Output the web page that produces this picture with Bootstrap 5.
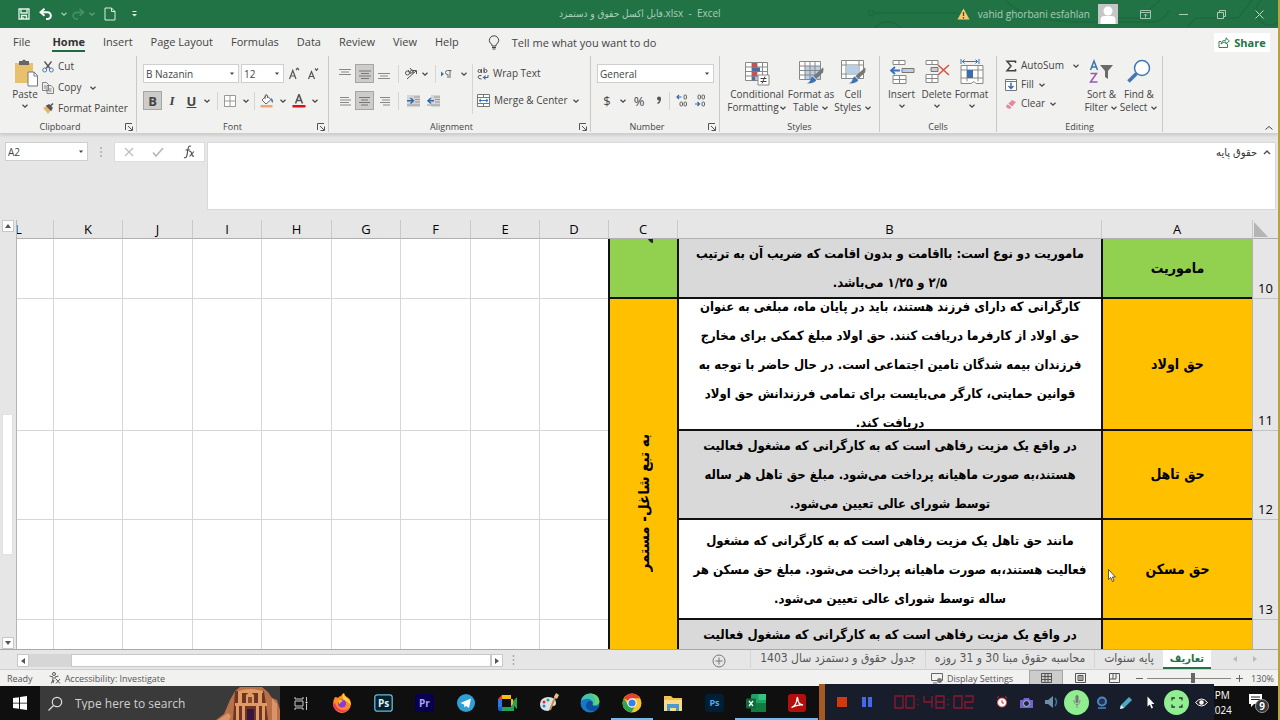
<!DOCTYPE html>
<html lang="en">
<head>
<meta charset="utf-8">
<meta name="viewport" content="width=device-width, initial-scale=1">
<title>Excel</title>
<link href="https://cdn.jsdelivr.net/npm/bootstrap@5.3.0/dist/css/bootstrap.min.css" rel="stylesheet">
<script src="https://cdn.jsdelivr.net/npm/bootstrap@5.3.0/dist/js/bootstrap.bundle.min.js"></script>
<style>
  body { font-family: "Open Sans", "DejaVu Sans", sans-serif; font-size: 10px; line-height: 13px; color: #444; background: #e6e6e6; border-right: 2px solid #b9a536; }
  button { border: 0; background: none; padding: 0; color: inherit; display: inline-flex; align-items: center; justify-content: center; flex: none; }
  svg { flex: none; display: block; }
  .ar { font-family: "DejaVu Sans Condensed", "DejaVu Sans", sans-serif; }

  /* title bar */
  .titlebar { height: 28px; background: #217346; color: #a9cfb8; position: relative; }
  .titlebar .caption { left: 559px; top: 7px; }
  .win-btn { width: 38px; height: 28px; }
  .circuit { left: 860px; top: 0; }

  /* tabs */
  .ribbon { background: #f1f1f0; border-bottom: 1px solid #cfcfcf; box-shadow: 0 1px 3px #c4c4c4; }
  .menu-row { height: 28px; font-size: 11px; }
  .menu-row .nav-link { color: #444; padding: 6px 9px 5px; line-height: 15px; }
  .menu-row .nav-link.active { font-weight: 700; color: #333; }
  .menu-row .nav-link.active span { display: block; border-bottom: 2px solid #1e6b41; padding-bottom: 1px; }
  .share { width: 56px; height: 19px; background: #fff; color: #217346; font-weight: 700; font-size: 11px; }

  /* ribbon groups */
  .groups { height: 77px; }
  .group { height: 76px; border-right: 1px solid #c9c9c9; flex: none; display: flex; flex-direction: column; position: relative; }
  .group-body { height: 65px; flex: none; }
  .group-name { font-size: 9px; line-height: 12px; text-align: center; }
  .launcher { position: absolute; right: 2px; bottom: 0; width: 10px; height: 10px; }
  .g-clip { width: 137px; } .g-font { width: 192px; } .g-align { width: 262px; } .g-num { width: 129px; }
  .g-style { width: 160px; } .g-cells { width: 117px; } .g-edit { width: 166px; }
  .big { flex-direction: column; justify-content: flex-start; text-align: center; line-height: 13px; padding-top: 3px; }
  .big svg.pic { height: 28px; width: 26px; margin-bottom: 1px; }
  .tool-row { display: flex; align-items: center; height: 19px; }
  .tool-row button { height: 19px; }
  .inset { padding-left: 2px; }
  .w12 { width: 12px; } .w16 { width: 16px; } .w19 { width: 19px; } .w20 { width: 20px; } .w28 { width: 28px; } .w34 { width: 34px; } .w35 { width: 35px; } .w40 { width: 40px; } .w50 { width: 50px; } .w58 { width: 58px; }
  .pressed { background: #cdccca !important; outline: 1px solid #a5a5a5; outline-offset: -1px; }
  .rule { width: 1px; height: 18px; background: #d5d5d5; flex: none; }
  .rule.tall { height: 50px; }
  .combo { height: 19px; border: 1px solid #cfcfcf; background: #fff url("data:image/svg+xml,%3Csvg xmlns='http://www.w3.org/2000/svg' viewBox='0 0 6 4'%3E%3Cpath d='M1 .5h4L3 3z' fill='%23444'/%3E%3C/svg%3E") no-repeat right 3px center / 6px 4px; appearance: none; padding: 0 2px; font-size: 10px; line-height: 14px; color: #444; border-radius: 0; }
  .c-font { width: 96px; margin-right: 2px; } .c-size { width: 43px; } .c-num { width: 117px; }
  .glyph { font-size: 13px; line-height: 16px; }
  .serif { font-family: "Liberation Serif", serif; }

  /* formula bar */
  .formula-bar { padding: 8px 2px 10px 5px; }
  .namebox { width: 83px; }
  .fx-box { width: 91px; height: 20px; background: #fff; border: 1px solid #ddd; }
  .formula { height: 68px; background: #fff; border: 1px solid #d9d9d9; margin-left: 2px; }
  .formula textarea { border: 0; resize: none; background: none; outline: 0; padding: 2px 2px; font-size: 11px; line-height: 15px; color: #333; height: 60px; }

  /* worksheet */
  .vscroll { width: 17px; padding: 0 3px 0 2px; border-right: 1px solid #b5b5b5; }
  .sb { background: #fff; border: 1px solid #c8c8c8; width: 12px; height: 12px; }
  .sheet { border-bottom: 1px solid #a8a8a8; }
  .cells { table-layout: fixed; width: calc(100% + 34px); border-collapse: separate; border-spacing: 0; color: #000; }
  .cells th { font-weight: 400; font-size: 13px; font-family: "Open Sans", sans-serif; }
  .cells thead th { height: 19px; padding: 0; line-height: 18px; text-align: center; background: #e6e6e6; border-left: 1px solid #c9c9c9; border-bottom: 1px solid #b0b0b0; }
  .cells tbody th { background: #e6e6e6; vertical-align: bottom; text-align: center; padding: 0; line-height: 20px; border-left: 1px solid #b0b0b0; border-bottom: 1px solid #c4c4c4; }
  .cells td { background: #fff; padding: 0; border-left: 1px solid #d6d6d6; border-bottom: 1px solid #d6d6d6; }
  .cells td.def { border-left: 2px solid #111; border-bottom: 2px solid #111; text-align: center; font-weight: 700; }
  .cells td.green { background: #92d050; } .cells td.amber { background: #ffc000; } .cells td.gray { background: #d9d9d9; }
  .col-h { width: 26px; } .col-a { width: 151px; } .col-b { width: 424px; } .col-c { width: 69px; } .col-n { width: 69px; } .col-m { width: 70px; }
  .txt { font-size: 13px; line-height: 29px; white-space: nowrap; overflow: hidden; display: flex; flex-direction: column; justify-content: center; align-items: center; }
  .txt.term { font-size: 14px; }
  .r10 { height: 58px; } .r11 { height: 130px; } .r12 { height: 87px; } .r13 { height: 98px; } .r14 { height: 86px; }
  .turned { writing-mode: vertical-rl; transform: rotate(180deg); font-size: 15px; line-height: 20px; margin: 0 auto; white-space: nowrap; }
  .pointer { left: 1091px; top: 349px; }

  /* sheet tabs */
  .sheetbar { height: 20px; padding-left: 17px; background: #e6e6e6; border-bottom: 1px solid #cfcfcf; }
  .hscroll { width: 486px; height: 13px; background: #d6d6d6; }
  .hthumb { background: #fff; border: 1px solid #c8c8c8; margin-left: 42px; }
  .sheet-tabs .nav-link { color: #555; font-size: 12px; line-height: 17px; padding: 0 9px 2px; white-space: nowrap; }
  .sheet-tabs .nav-link.active { background: #fff; color: #217346; font-weight: 700; font-size: 11px; border-bottom: 2px solid #217346; padding: 0 7px; }
  .tab-arrows { width: 67px; height: 18px; }

  /* status bar */
  .statusbar { height: 16px; background: #f1f1f0; font-size: 9px; color: #555; padding-left: 7px; }
  .view-btn { width: 34px; height: 16px; }
  .zoom { width: 84px; height: 12px; appearance: none; background: linear-gradient(#888, #888) center / 100% 1px no-repeat; margin: 0; }
  .zoom::-webkit-slider-thumb { appearance: none; width: 4px; height: 10px; background: #666; }

  /* task bar */
  .taskbar { height: 34px; background: #0f0f0f; position: relative; }
  .search { width: 240px; background: #3a3a3a; color: #d5d5d5; }
  .search input { background: none; border: 0; outline: 0; color: #ddd; font-size: 12px; padding: 0; width: 136px; }
  .search input::placeholder { color: #d0d0d0; opacity: 1; }
  .apps { width: 538px; }
  .apps button { flex: 1; }
  .apps button.running { box-shadow: inset 0 -2px #76b9ed; }
  .recorder { right: 64px; bottom: 0; width: 395px; height: 36px; background: #181d2b; border-left: 6px solid #a55a22; }
  .recorder button { width: 25px; height: 25px; border-radius: 50%; }
  .recorder .on { background: #90ee90; }
  .clock { color: #fff; font-size: 10px; line-height: 15px; width: 50px; text-align: center; }
</style>
</head>
<body class="d-flex flex-column vh-100 overflow-hidden">

<svg width="0" height="0" class="position-absolute" aria-hidden="true">
  <symbol id="chev" viewBox="0 0 8 8"><path d="M1.500 2.800 4 5.200 6.500 2.800" fill="none" stroke="currentColor" stroke-width="1.200"/></symbol>
  <symbol id="launch" viewBox="0 0 10 10"><path d="M1.500 8V1.500H8M4 4l4 4M8.500 4.500v4h-4" fill="none" stroke="#555"/></symbol>
  <symbol id="brush" viewBox="0 0 20 18"><path d="M19 0q1 1 0 5l-7 7-3-3z" fill="#777"/><path d="m9 9 3 3q0 5-10 5 4-2 4-5 1-3 3-3z" fill="#3a74b4"/><path d="m8 9 4 4" stroke="#fff"/></symbol>
</svg>

<header class="titlebar d-flex align-items-center flex-shrink-0">
  <div class="d-flex align-items-center ps-3">
    <button class="w16" aria-label="Save"><svg width="12" height="12" viewBox="0 0 12 12"><path d="M1 1h10v10H1zM3 1v4h6V1M3.500 11V7.500h5V11M5 9v2" fill="none" stroke="#e5f2ea" stroke-width="1.300"/></svg></button>
    <button class="w28" aria-label="Undo"><svg width="14" height="12" viewBox="0 0 14 12"><path d="M5.500.8 1.500 4.300l4 3.500M2 4.300h6.500a3.300 3.300 0 0 1 0 6.700H7" fill="none" stroke="#fff" stroke-width="1.900"/></svg></button>
    <svg width="8" height="8"><use href="#chev"/></svg>
    <button class="w20" aria-label="Redo"><svg width="14" height="12" viewBox="0 0 14 12"><path d="m8.500.8 4 3.500-4 3.500M12 4.300H5.500a3.300 3.300 0 0 0 0 6.700H7" fill="none" stroke="#439068" stroke-width="1.700"/></svg></button>
    <svg class="opacity-50" width="8" height="8"><use href="#chev"/></svg>
    <button class="w28" aria-label="New"><svg width="12" height="14" viewBox="0 0 12 14"><path d="M1 1h6.500L11 4.500V13H1zM7.500 1v3.500H11" fill="none" stroke="#dceee3"/></svg></button>
    <button class="w20" aria-label="Customize toolbar"><svg width="7" height="8" viewBox="0 0 7 8"><path d="M1.500 1.500h4" stroke="#dceee3"/><path d="M1 4h5L3.500 6.500z" fill="#dceee3"/></svg></button>
  </div>
  <div class="caption position-absolute"><bdi class="ar">فایل اکسل حقوق و دستمزد</bdi>.xlsx&nbsp; -&nbsp; Excel</div>
  <svg class="circuit position-absolute" width="418" height="28" viewBox="0 0 418 28"><g fill="none" stroke="#1d6a3e" stroke-width="1.500"><circle cx="11" cy="13" r="2.500"/><path d="M14 13h85M15 28q5-7 14-6 8 1 11 6M145 0q20 22 80 22h70q10-3 14-12M235 28l10-10h35l20-18M328 26l8-8h42l14-18"/><circle cx="410" cy="11" r="14"/></g></svg>
  <div class="d-flex align-items-center ms-auto position-relative">
    <svg width="13" height="12" viewBox="0 0 13 12"><path d="M6.500.5 12.500 11.500H.5z" fill="#f7c873"/><path d="M6.500 4v4M6.500 9v1.500" stroke="#6d3c14" stroke-width="1.300"/></svg>
    <span class="ps-2 pe-2">vahid ghorbani esfahlan</span>
    <svg width="20" height="20" viewBox="0 0 20 20"><path d="M0 0h20v20H0z" fill="#c6c6c6"/><circle cx="10" cy="7" r="4.500" fill="#fff"/><path d="M2.500 20v-4q0-4 4-4h7q4 0 4 4v4z" fill="#fff"/></svg>
    <button class="win-btn ms-2" aria-label="Ribbon display options"><svg width="11" height="9" viewBox="0 0 11 9"><path d="M.5.500h10v8H.5zM.5 2.500h10M5.500 7.500V4M4 5.500 5.500 4 7 5.500" fill="none" stroke="#9cc9af"/></svg></button>
    <button class="win-btn" aria-label="Minimize"><svg width="9" height="9" viewBox="0 0 9 9"><path d="M0 4.500h9" stroke="#a6cfb7"/></svg></button>
    <button class="win-btn" aria-label="Restore"><svg width="9" height="9" viewBox="0 0 9 9"><path d="M.5 2.500h6v6h-6zM2.500 2.500v-2h6v6h-2" fill="none" stroke="#a6cfb7"/></svg></button>
    <button class="win-btn" aria-label="Close"><svg width="9" height="9" viewBox="0 0 9 9"><path d="m.5.500 8 8m0-8-8 8" stroke="#b6dac5"/></svg></button>
  </div>
</header>

<section class="ribbon flex-shrink-0">
  <nav class="menu-row d-flex align-items-center">
    <div class="nav flex-nowrap ps-1">
      <a class="nav-link me-1" href="#">File</a>
      <a class="nav-link active" href="#"><span>Home</span></a>
      <a class="nav-link" href="#">Insert</a>
      <a class="nav-link text-nowrap" href="#">Page Layout</a>
      <a class="nav-link" href="#">Formulas</a>
      <a class="nav-link" href="#">Data</a>
      <a class="nav-link" href="#">Review</a>
      <a class="nav-link" href="#">View</a>
      <a class="nav-link" href="#">Help</a>
    </div>
    <button class="ms-3"><svg class="ms-1 me-2" width="12" height="15" viewBox="0 0 12 15"><path d="M4 11V9.500Q1.300 8 1.300 5.500a4.700 4.700 0 0 1 9.400 0Q10.700 8 8 9.500V11zM4 12.500h4M4.500 14h3" fill="none" stroke="#444"/></svg><span class="ps-1">Tell me what you want to do</span></button>
    <button class="share ms-auto me-2 gap-1"><svg width="12" height="11" viewBox="0 0 12 11"><path d="M3 4.500H1v6h8.500V7M3 7q.5-4 5-4V.8L11.300 4 8 7V5q-3 0-5 2z" fill="none" stroke="#217346" stroke-width=".9"/></svg>Share</button>
  </nav>

  <div class="groups d-flex">
    <div class="group g-clip">
      <div class="group-body d-flex ps-2">
        <button class="big w34"><svg class="pic" viewBox="0 0 26 28"><path d="M3 4h18v20H3z" fill="#e8c16c"/><path d="M7 2h3q2-3 4 0h3v4H7z" fill="#666"/><path d="M16 13h6l3.500 3.500V27H16z" fill="#fff" stroke="#777"/><path d="M22 13v4h3.500" fill="none" stroke="#777"/></svg>Paste<svg width="8" height="10"><use href="#chev"/></svg></button>
        <div class="d-flex flex-column align-items-start">
          <button class="pt-1"><svg class="me-1" width="12" height="12" viewBox="0 0 12 12"><path d="m2.500.5 5.500 7M9.500.5 4 7.500" stroke="#555" stroke-width="1.300"/><circle cx="2.700" cy="9" r="2" fill="none" stroke="#4a80b8"/><circle cx="9.300" cy="9" r="2" fill="none" stroke="#4a80b8"/></svg>Cut</button>
          <button class="pt-2"><svg class="me-1" width="12" height="12" viewBox="0 0 12 12"><path d="M.5.500h4l2 2v6h-6zM5 3.500h4l2.500 2.500v5.500H5zM2 4h2M2 6h2M6.500 7h3M6.500 9h3" fill="#eee" stroke="#777" stroke-width=".9"/></svg>Copy<svg class="ms-2" width="8" height="8"><use href="#chev"/></svg></button>
          <button class="pt-2"><svg class="me-1" width="12" height="12" viewBox="0 0 12 12"><path d="m1 5 4-2 4 4-3 4q-1-2-5-6z" fill="#e6b36a"/><path d="m5 3 2-1 3 3-1 2zM8.500 3 11 .5" fill="#555" stroke="#555" stroke-width="1.500"/></svg>Format Painter</button>
        </div>
      </div>
      <div class="group-name pe-3">Clipboard</div>
      <button class="launcher" aria-label="Clipboard settings"><svg width="10" height="10"><use href="#launch"/></svg></button>
    </div>

    <div class="group g-font">
      <div class="group-body d-flex flex-column gap-2 pt-2 ps-1">
        <div class="tool-row inset">
          <select class="combo c-font" aria-label="Font"><option>B Nazanin</option></select>
          <select class="combo c-size" aria-label="Font size"><option>12</option></select>
          <button class="w19" aria-label="Grow font"><svg width="12" height="13" viewBox="0 0 12 13"><path d="m1.500 12 3.300-8.500L8 12M2.500 9h4.500M8 3l1.500-1.800L11 3" fill="none" stroke="#555" stroke-width="1.200"/></svg></button>
          <button class="w19" aria-label="Shrink font"><svg width="12" height="13" viewBox="0 0 12 13"><path d="m1.500 12 3-7.500L7.500 12M2.500 9.500h4M8 1.500l1.500 1.800L11 1.500" fill="none" stroke="#555" stroke-width="1.200"/></svg></button>
        </div>
        <div class="tool-row inset">
          <button class="w19 pressed fw-bold glyph">B</button>
          <button class="w20 glyph fst-italic fw-bold serif">I</button>
          <button class="w19 glyph fw-bold text-decoration-underline">U</button>
          <button class="w12" aria-label="Underline styles"><svg width="8" height="8"><use href="#chev"/></svg></button>
          <span class="rule mx-1"></span>
          <button class="w16" aria-label="Borders"><svg width="12" height="12" viewBox="0 0 12 12"><path d="M.5.500h11v11H.5zM6 0v12M0 6h12" fill="#fff" stroke="#999"/></svg></button>
          <button class="w16" aria-label="Border styles"><svg width="8" height="8"><use href="#chev"/></svg></button>
          <span class="rule me-1"></span>
          <button class="w16" aria-label="Fill colour"><svg width="14" height="14" viewBox="0 0 14 14"><path d="M.5 11h12v2.500H.5z" fill="#f2a37a"/><path d="M6.500 1.500 2 6l4 4 5-4.500zM5 5V1.500q1.500-2 2.500 0V4" fill="#fff" stroke="#666"/><path d="M11 4q3 2 1.500 5-1.500-1-1.500-5z" fill="#3a74b4"/></svg></button>
          <button class="w16" aria-label="Fill colours"><svg width="8" height="8"><use href="#chev"/></svg></button>
          <button class="w16" aria-label="Font colour"><svg width="14" height="14" viewBox="0 0 14 14"><path d="M.5 11h13v2.500H.5z" fill="#d11"/><path d="m3.500 9.500 3.500-9 3.500 9M4.500 6.500h5" fill="none" stroke="#555" stroke-width="1.600"/></svg></button>
          <button class="w16" aria-label="Font colours"><svg width="8" height="8"><use href="#chev"/></svg></button>
        </div>
      </div>
      <div class="group-name">Font</div>
      <button class="launcher" aria-label="Font settings"><svg width="10" height="10"><use href="#launch"/></svg></button>
    </div>

    <div class="group g-align">
      <div class="group-body d-flex pt-2 ps-1">
        <div class="d-flex flex-column gap-2 inset">
          <div class="tool-row">
            <button class="w20" aria-label="Top align"><svg width="12" height="12" viewBox="0 0 12 12"><path d="M0 1.500h12M2 4h8M0 6.500h12" stroke="#888"/></svg></button>
            <button class="w19 pressed" aria-label="Middle align"><svg width="12" height="12" viewBox="0 0 12 12"><path d="M0 3h12M2 5.500h8M0 8h12M2 10.500h8" stroke="#777"/></svg></button>
            <button class="w20" aria-label="Bottom align"><svg width="12" height="12" viewBox="0 0 12 12"><path d="M0 5.500h12M2 8h8M0 10.500h12" stroke="#888"/></svg></button>
            <span class="rule mx-1"></span>
            <button class="w16" aria-label="Orientation"><svg width="14" height="13" viewBox="0 0 14 13"><path d="M3 12 12 4M9 3.500h3.500V7" fill="none" stroke="#555"/><circle cx="3.500" cy="6" r="2" fill="none" stroke="#555"/><path d="m4 3 3 4M6 1l3.500 4.500" stroke="#555"/><circle cx="8" cy="4.500" r="1.500" fill="none" stroke="#555"/></svg></button>
            <button class="w12" aria-label="Orientations"><svg width="8" height="8"><use href="#chev"/></svg></button>
            <span class="rule ms-1"></span>
            <button class="w20" aria-label="Text direction"><svg width="12" height="10" viewBox="0 0 12 10"><path d="M1 2.500 4 5 1 7.500z" fill="#3a74b4"/><path d="M11.500 1.500H7.500a2 2 0 0 0 0 4H8V9M10 1.500V9" fill="none" stroke="#666"/></svg></button>
            <button class="w16" aria-label="Text directions"><svg width="8" height="8"><use href="#chev"/></svg></button>
          </div>
          <div class="tool-row">
            <button class="w20" aria-label="Align left"><svg width="11" height="10" viewBox="0 0 11 10"><path d="M0 1.500h9M0 4h11M0 6.500h9M0 9h11" stroke="#888"/></svg></button>
            <button class="w19 pressed" aria-label="Centre"><svg width="11" height="10" viewBox="0 0 11 10"><path d="M0 1.500h11M2 4h7M0 6.500h11M2 9h7" stroke="#777"/></svg></button>
            <button class="w20" aria-label="Align right"><svg width="11" height="10" viewBox="0 0 11 10"><path d="M1 1.500h10M3 4h8M1 6.500h10M4 9h7" stroke="#888"/></svg></button>
            <span class="rule mx-1"></span>
            <button class="w20" aria-label="Decrease indent"><svg width="13" height="12" viewBox="0 0 13 12"><path d="M0 0h13v12H0z" fill="#d5d5d5"/><path d="M7 2h6M8 4.500h5M8 7h5M0 10h13" stroke="#999"/><path d="M0 5.800h6M3.500 3 6.500 5.800 3.500 8.500" fill="none" stroke="#3668a5" stroke-width="1.500"/></svg></button>
            <button class="w20" aria-label="Increase indent"><svg width="13" height="12" viewBox="0 0 13 12"><path d="M4 0h9v12H4z" fill="#d5d5d5"/><path d="M7 2h6M8 4.500h5M8 7h5M0 10h13" stroke="#999"/><path d="M7 5.800H1M4 3 1 5.800 4 8.500" fill="none" stroke="#3668a5" stroke-width="1.500"/></svg></button>
          </div>
        </div>
        <span class="rule tall me-1"></span>
        <div class="d-flex flex-column gap-2 align-items-start">
          <div class="tool-row"><button><svg class="me-1" width="12" height="13" viewBox="0 0 12 13"><g fill="none" stroke="#555"><circle cx="2.500" cy="4" r="1.500"/><path d="M4.500 2v4M7 .5V6M4.500 8.500Q1 8 1 10t3.500 2M6.500 10.500H11V8"/><circle cx="8.500" cy="4" r="1.500"/></g><path d="m8.500 8-3 2.500 3 2.500z" fill="#3a74b4"/></svg>Wrap Text</button></div>
          <div class="tool-row"><button><svg class="me-1" width="13" height="13" viewBox="0 0 13 13"><path d="M.5.500h12v12H.5zM.5 3.500h12M.5 9.500h12M6.500.500v3M6.500 9.500v3" fill="#fff" stroke="#777"/><path d="M2 6.500h9M4 4.800 2 6.500l2 1.700M9 4.800l2 1.700-2 1.700" fill="none" stroke="#3a74b4"/></svg>Merge &amp; Center<svg class="ms-1" width="8" height="8"><use href="#chev"/></svg></button></div>
        </div>
      </div>
      <div class="group-name pe-3">Alignment</div>
      <button class="launcher" aria-label="Alignment settings"><svg width="10" height="10"><use href="#launch"/></svg></button>
    </div>

    <div class="group g-num">
      <div class="group-body d-flex flex-column gap-2 pt-2 ps-1">
        <div class="tool-row inset"><select class="combo c-num" aria-label="Number format"><option>General</option></select></div>
        <div class="tool-row inset">
          <button class="w20 glyph" aria-label="Currency">$</button>
          <button class="w12" aria-label="Currencies"><svg width="8" height="8"><use href="#chev"/></svg></button>
          <button class="w20 glyph">%</button>
          <button class="w20 glyph fw-bold" aria-label="Comma style"><svg width="6" height="9" viewBox="0 0 6 9"><circle cx="3" cy="2.500" r="2" fill="#555"/><path d="M4.300 2.500Q4.500 6 1.500 7.500" fill="none" stroke="#555" stroke-width="1.300"/></svg></button>
          <span class="rule me-1"></span>
          <button class="w16" aria-label="Increase decimal"><svg width="12" height="13" viewBox="0 0 12 13"><path d="M5.500 3H1M3 1 1 3l2 2" fill="none" stroke="#3668a5" stroke-width="1.200"/><g fill="none" stroke="#666"><rect x="8" y="1" width="2.500" height="4" rx="1"/><rect x="4" y="8" width="2.500" height="4" rx="1"/><rect x="8" y="8" width="2.500" height="4" rx="1"/></g></svg></button>
          <button class="w20" aria-label="Decrease decimal"><svg width="12" height="13" viewBox="0 0 12 13"><path d="M1 10h4.500M3.500 8l2 2-2 2" fill="none" stroke="#3668a5" stroke-width="1.200"/><g fill="none" stroke="#666"><rect x="4" y="1" width="2.500" height="4" rx="1"/><rect x="8" y="1" width="2.500" height="4" rx="1"/><rect x="8" y="8" width="2.500" height="4" rx="1"/></g></svg></button>
        </div>
      </div>
      <div class="group-name pe-3">Number</div>
      <button class="launcher" aria-label="Number settings"><svg width="10" height="10"><use href="#launch"/></svg></button>
    </div>

    <div class="group g-style">
      <div class="group-body d-flex ps-2">
        <button class="big w58"><svg class="pic" viewBox="0 0 26 28"><path d="M1.500 3.500h22v18h-22zM1.500 8h22M1.500 12.500h22M1.500 17h22M8 3.500v18M13 3.500v18M18.500 3.500v18" fill="#fff" stroke="#888"/><path d="M8 4h5v4.500H8zM8 13h5v4.500H8z" fill="#c9504c"/><path d="M8 8.500h8v4H8zM8 17.500h3.500v4H8z" fill="#4a6fa8"/><path d="M14 16h11v10H14z" fill="#fff" stroke="#888"/><path d="M16.500 19.500h6M16.500 22.500h6M21 17.500l-3 7" stroke="#444"/></svg><span class="text-nowrap">Conditional<br>Formatting<svg class="d-inline" width="8" height="8"><use href="#chev"/></svg></span></button>
        <button class="big w50"><svg class="pic" viewBox="0 0 26 28"><path d="M1.500 2.500h21v18h-21z" fill="#fff"/><path d="M7 7h15.500v13.500H7z" fill="#b8cfe8"/><path d="M1.500 2.500h21v18h-21zM1.500 7h21M1.500 11.500h21M1.500 16h21M7 2.500v18M12 2.500v18M17 2.500v18" fill="none" stroke="#888"/><use href="#brush" x="7" y="8" width="19" height="18"/></svg><span class="text-nowrap">Format as<br>Table <svg class="d-inline" width="8" height="8"><use href="#chev"/></svg></span></button>
        <button class="big w34"><svg class="pic" viewBox="0 0 26 28"><path d="M1.500 1.500h22v18h-22zM1.500 6h22M1.500 15h22M6 1.500v18M19 1.500v18" fill="#fff" stroke="#888"/><path d="M6.500 6.500h12v8h-12z" fill="#b8cfe8"/><use href="#brush" x="7" y="8" width="19" height="18"/></svg><span class="text-nowrap">Cell<br>Styles <svg class="d-inline" width="8" height="8"><use href="#chev"/></svg></span></button>
      </div>
      <div class="group-name">Styles</div>
    </div>

    <div class="group g-cells">
      <div class="group-body d-flex ps-1">
        <button class="big w35"><svg class="pic" viewBox="0 0 26 28"><path d="M4 1.500h12v4H4zM10 1.500v4M4 16.500h13v8H4zM10.500 16.500v8M4 20.500h13" fill="#fff" stroke="#888"/><path d="M13 9.500h12v4H13z" fill="#b8cfe8" stroke="#777"/><path d="M11 11.500H2M6 8l-4 3.500L6 15" fill="none" stroke="#3a74b4" stroke-width="1.800"/></svg><span>Insert</span><svg width="8" height="10"><use href="#chev"/></svg></button>
        <button class="big w35"><svg class="pic" viewBox="0 0 26 28"><path d="M2 1.500h12v4H2zM8 1.500v4M2 15.500h12v8H2zM8 15.500v8M2 19.500h12" fill="#fff" stroke="#888"/><path d="M7 8.500h7v4H7z" fill="#ccc" stroke="#777"/><path d="m14 6 11 10M25 6 14 16" stroke="#d8553f" stroke-width="1.600"/></svg><span>Delete</span><svg width="8" height="10"><use href="#chev"/></svg></button>
        <button class="big w35"><svg class="pic" viewBox="0 0 26 28"><path d="M2 6.500h22v18h-7l-2-2-3 2H2zM2 11h22M2 19h22M8 6.500v16M19 6.500v16" fill="#fff" stroke="#888"/><path d="M8 11h6v8H8z" fill="#3a6cae"/><path d="M2 0v5M20 0v5M3 2.500h16M5.500.5l-2 2 2 2M16.500.5l2 2-2 2" fill="none" stroke="#3a74b4"/></svg><span>Format</span><svg width="8" height="10"><use href="#chev"/></svg></button>
      </div>
      <div class="group-name">Cells</div>
    </div>

    <div class="group g-edit">
      <div class="group-body d-flex ps-2">
        <div class="d-flex flex-column align-items-start">
          <button class="tool-row"><svg class="me-1" width="12" height="12" viewBox="0 0 12 12"><path d="M10.500 3V1.200H2L6 6l-4 4.800h8.500V9" fill="none" stroke="#444" stroke-width="1.500"/></svg>AutoSum<svg class="ms-2" width="8" height="8"><use href="#chev"/></svg></button>
          <button class="tool-row"><svg class="me-1" width="12" height="12" viewBox="0 0 12 12"><path d="M.5.500h11v11H.5zM.5 2.500h11" fill="#fff" stroke="#777"/><path d="M6 3.500V9M3.500 7 6 9.500 8.500 7" fill="none" stroke="#3668a5" stroke-width="1.400"/></svg>Fill<svg class="ms-1" width="8" height="8"><use href="#chev"/></svg></button>
          <button class="tool-row"><svg class="me-1" width="12" height="12" viewBox="0 0 12 12"><path d="m1 8 6-6 4 2-6 7-3-1z" fill="#e48a9b"/><path d="m3 6 4 3" stroke="#fff"/></svg>Clear<svg class="ms-1" width="8" height="8"><use href="#chev"/></svg></button>
        </div>
        <button class="big w35 ms-1"><svg class="pic" viewBox="0 0 26 28"><g fill="none" stroke-width="1.500"><path d="m2.500 11 3.500-9 3.500 9M4 8h4" stroke="#3a74b4"/><path d="M2.500 14.500h6l-6 8.500h7" stroke="#9a57b5"/></g><path d="M12 6h13l-5 6v8l-3-2v-6z" fill="#6a6a6a"/></svg><span class="text-nowrap">Sort &amp;<br>Filter <svg class="d-inline" width="8" height="8"><use href="#chev"/></svg></span></button>
        <button class="big w40"><svg class="pic" viewBox="0 0 26 28"><circle cx="16" cy="9" r="7.500" fill="#fff" stroke="#3f78b5" stroke-width="1.500"/><path d="m10.500 14.500-8 8" stroke="#3f78b5" stroke-width="3.500"/></svg><span class="text-nowrap">Find &amp;<br>Select <svg class="d-inline" width="8" height="8"><use href="#chev"/></svg></span></button>
      </div>
      <div class="group-name">Editing</div>
    </div>
    <button class="ms-auto me-1 align-self-end" aria-label="Collapse ribbon"><svg width="10" height="10" viewBox="0 0 10 10"><path d="m1.500 6.500 3.500-3 3.500 3" fill="none" stroke="#444"/></svg></button>
  </div>
</section>

<section class="formula-bar d-flex flex-shrink-0">
  <select class="combo namebox" aria-label="Name box"><option>A2</option></select>
  <svg class="mx-2" width="10" height="20" viewBox="0 0 10 20"><path d="M5 5v11" stroke="#aaa" stroke-width="1.500" stroke-dasharray="2 2"/></svg>
  <div class="fx-box d-flex align-items-center justify-content-around">
    <button aria-label="Cancel"><svg width="10" height="10" viewBox="0 0 10 10"><path d="m1 1 8 8m0-8L1 9" stroke="#bbb" stroke-width="1.200"/></svg></button>
    <button aria-label="Enter"><svg width="12" height="10" viewBox="0 0 12 10"><path d="m1 5.500 3 3.500 7-8" fill="none" stroke="#bbb" stroke-width="1.800"/></svg></button>
    <button aria-label="Insert function"><svg width="12" height="14" viewBox="0 0 12 14"><path d="M8 1.300Q5.500 0 5 4L4 10q-.5 3.500-3 2.500M2.500 5h4.500M6.500 6.500q1.500-.5 2 1.500l.8 2.500q.5 1 1.700.5M11 6.500l-4.500 5" fill="none" stroke="#444" stroke-width="1.100"/></svg></button>
  </div>
  <div class="formula d-flex flex-grow-1">
    <textarea class="flex-grow-1 ar" dir="rtl" aria-label="Formula">حقوق پایه</textarea>
    <svg class="mt-1 me-1 ms-1" width="8" height="10" viewBox="0 0 8 10"><path d="m1 7 3-3 3 3" fill="none" stroke="#555" stroke-width="1.500"/></svg>
  </div>
</section>

<main class="sheet d-flex flex-grow-1 overflow-hidden">
  <div class="vscroll d-flex flex-column flex-shrink-0">
    <button class="sb" aria-label="Scroll up"><svg width="6" height="4"><path d="M0 4h6L3 0z" fill="#555"/></svg></button>
    <div class="flex-grow-1 d-flex flex-column"><div style="flex-grow:184"></div><div class="bg-white border" style="flex-grow:140"></div><div style="flex-grow:83"></div></div>
    <button class="sb" aria-label="Scroll down"><svg width="6" height="4"><path d="M0 0h6L3 4z" fill="#555"/></svg></button>
  </div>
  <div class="flex-grow-1 overflow-hidden position-relative" dir="rtl">
    <table class="cells">
      <colgroup><col class="col-h"><col class="col-a"><col class="col-b"><col class="col-c"><col class="col-n"><col class="col-n"><col class="col-m"><col class="col-n"><col class="col-m"><col class="col-n"><col class="col-m"><col class="col-n"><col></colgroup>
      <thead><tr><th aria-label="Select all"><svg class="me-auto" width="15" height="15" viewBox="0 0 15 15"><path d="M1 0v15h14z" fill="#b5b5b5"/></svg></th><th>A</th><th>B</th><th>C</th><th>D</th><th>E</th><th>F</th><th>G</th><th>H</th><th>I</th><th>J</th><th>K</th><th>L</th></tr></thead>
      <tbody class="ar">
        <tr><th>10</th><td class="def green"><div class="txt term r10">ماموریت</div></td>
          <td class="def gray"><div class="txt r10"><span>ماموریت دو نوع است: بااقامت و بدون اقامت که ضریب آن به ترتیب</span><span>۲/۵ و ۱/۲۵ می‌باشد.</span></div></td>
          <td class="def green align-top"><svg class="ms-auto me-4" width="8" height="5" viewBox="0 0 8 5"><path d="M3 0h5v4Q5 4 3 0z" fill="#222"/></svg></td><td></td><td></td><td></td><td></td><td></td><td></td><td></td><td></td><td></td></tr>
        <tr><th>11</th><td class="def amber"><div class="txt term r11">حق اولاد</div></td>
          <td class="def"><div class="txt r11"><span>کارگرانی که دارای فرزند هستند، باید در پایان ماه، مبلغی به عنوان</span><span>حق اولاد از کارفرما دریافت کنند. حق اولاد مبلغ کمکی برای مخارج</span><span>فرزندان بیمه شدگان تامین اجتماعی است. در حال حاضر با توجه به</span><span>قوانین حمایتی، کارگر می‌بایست برای تمامی فرزندانش حق اولاد</span><span>دریافت کند.</span></div></td>
          <td class="def amber align-middle" rowspan="4"><div class="turned">به تبع شاغل- مستمر</div></td><td></td><td></td><td></td><td></td><td></td><td></td><td></td><td></td><td></td></tr>
        <tr><th>12</th><td class="def amber"><div class="txt term r12">حق تاهل</div></td>
          <td class="def gray"><div class="txt r12"><span>در واقع یک مزیت رفاهی است که به کارگرانی که مشغول فعالیت</span><span>هستند،به صورت ماهیانه پرداخت می‌شود. مبلغ حق تاهل هر ساله</span><span>توسط شورای عالی تعیین می‌شود.</span></div></td><td></td><td></td><td></td><td></td><td></td><td></td><td></td><td></td><td></td></tr>
        <tr><th>13</th><td class="def amber"><div class="txt term r13">حق مسکن</div></td>
          <td class="def"><div class="txt r13"><span>مانند حق تاهل یک مزیت رفاهی است که به کارگرانی که مشغول</span><span>فعالیت هستند،به صورت ماهیانه پرداخت می‌شود. مبلغ حق مسکن هر</span><span>ساله توسط شورای عالی تعیین می‌شود.</span></div></td><td></td><td></td><td></td><td></td><td></td><td></td><td></td><td></td><td></td></tr>
        <tr><th></th><td class="def amber"></td>
          <td class="def gray"><div class="txt r14 justify-content-start"><span>در واقع یک مزیت رفاهی است که به کارگرانی که مشغول فعالیت</span></div></td><td></td><td></td><td></td><td></td><td></td><td></td><td></td><td></td><td></td></tr>
      </tbody>
    </table>
    <svg class="pointer position-absolute" width="9" height="13" viewBox="0 0 9 13"><path d="M.5.500v10l2.300-2 1.700 4 1.500-.7-1.600-3.800h3z" fill="#fff" stroke="#333" stroke-width=".8"/></svg>
  </div>
</main>

<div class="sheetbar d-flex align-items-start flex-shrink-0">
  <div class="hscroll d-flex mt-1">
    <button class="sb h-100" aria-label="Scroll left"><svg width="4" height="6"><path d="M4 0v6L0 3z" fill="#555"/></svg></button>
    <div class="hthumb flex-grow-1"></div>
    <button class="sb h-100" aria-label="Scroll right"><svg width="4" height="6"><path d="M0 0v6l4-3z" fill="#555"/></svg></button>
  </div>
  <svg class="ms-2 mt-1" width="5" height="12"><path d="M2.500 1v10" stroke="#aaa" stroke-width="1.500" stroke-dasharray="2 2"/></svg>
  <button class="ms-auto me-4 mt-1" aria-label="New sheet"><svg width="14" height="14" viewBox="0 0 14 14"><path d="M7 3.500v7M3.500 7h7" stroke="#777"/><circle cx="7" cy="7" r="6" fill="none" stroke="#777"/></svg></button>
  <nav class="nav sheet-tabs ar flex-nowrap" dir="rtl">
    <a class="nav-link active" href="#">تعاریف</a>
    <a class="nav-link" href="#">پایه سنوات</a><span class="rule"></span>
    <a class="nav-link" href="#">محاسبه حقوق مبنا 30 و 31 روزه</a><span class="rule"></span>
    <a class="nav-link" href="#">جدول حقوق و دستمزد سال 1403</a><span class="rule"></span>
  </nav>
  <div class="tab-arrows d-flex align-items-center justify-content-center gap-3">
    <button aria-label="Previous sheet"><svg width="4" height="6"><path d="M4 0v6L0 3z" fill="#bbb"/></svg></button>
    <button aria-label="Next sheet"><svg width="4" height="6"><path d="M0 0v6l4-3z" fill="#bbb"/></svg></button>
  </div>
</div>

<footer class="statusbar d-flex align-items-center flex-shrink-0">
  <span>Ready</span>
  <svg class="ms-3 me-1" width="12" height="12" viewBox="0 0 12 12"><circle cx="5" cy="2" r="1.500" fill="none" stroke="#555"/><path d="M.5 4 4 5v2l-1.500 4.500M9.500 4 6 5v2M5 8l-1 3M7 7l4 4.500m0-4.500-4 4.500" fill="none" stroke="#555"/></svg>
  <span>Accessibility: Investigate</span>
  <svg class="ms-auto me-1" width="12" height="11" viewBox="0 0 12 11"><path d="M.5.500h11v7H.5zM2 10h4" fill="none" stroke="#666"/><circle cx="8.500" cy="7.500" r="2.500" fill="#777"/></svg>
  <span class="me-3">Display Settings</span>
  <button class="view-btn pressed" aria-label="Normal view"><svg width="11" height="10" viewBox="0 0 11 10"><path d="M.5.500h10v9H.5zM.5 3.500h10M.5 6.500h10M4 .5v9M7 .5v9" fill="none" stroke="#555"/></svg></button>
  <button class="view-btn" aria-label="Page layout view"><svg width="11" height="10" viewBox="0 0 11 10"><path d="M.5.500h10v9H.5zM3 2.500h5v5H3zM3.500 4h4M3.500 6h4" fill="none" stroke="#555"/></svg></button>
  <button class="view-btn" aria-label="Page break view"><svg width="11" height="10" viewBox="0 0 11 10"><path d="M.5.500h10v9H.5zM4 .5V6M7 .5V6H.5" fill="none" stroke="#555"/></svg></button>
  <button class="w16" aria-label="Zoom out"><svg width="7" height="7"><path d="M0 3.500h7" stroke="#666"/></svg></button>
  <input type="range" class="zoom" min="10" max="240" value="136" aria-label="Zoom">
  <button class="w16" aria-label="Zoom in"><svg width="7" height="7"><path d="M0 3.500h7M3.500 0v7" stroke="#666"/></svg></button>
  <span class="ms-1 me-1">130%</span>
</footer>

<div class="taskbar d-flex flex-shrink-0">
  <button class="w40" aria-label="Start"><svg width="14" height="14" viewBox="0 0 14 14"><path d="m0 2 6-.8v5.500H0zM7 1l7-1v6.700H7zM0 7.500h6v5.300L0 12zM7 7.500h7V14l-7-1z" fill="#fff"/></svg></button>
  <label class="search d-flex align-items-center">
    <svg class="mx-2" width="15" height="15" viewBox="0 0 15 15"><circle cx="9" cy="6" r="4.700" fill="none" stroke="#ddd" stroke-width="1.200"/><path d="m5.500 9.500-5 5" stroke="#ddd" stroke-width="1.200"/></svg>
    <input type="text" class="ms-1" placeholder="Type here to search" aria-label="Search">
    <svg class="ms-auto" width="64" height="34" viewBox="0 0 64 34"><path d="M0 34 8 28l6-14 5-9 5-4h22l6 5 4 6 5 2 3 10v10z" fill="#b96f47"/><path d="M2 34l10-7 3 3-2 4zM56 12l5 6v16h-5z" fill="#d9946a"/><path d="M19 5h29l4 29H17z" fill="#6f3524"/><path d="M22 5q13-4 25 0v2H22zM19 17h32v3H19zM22 7h4v10h-4zM42 7h4v10h-4zM30 9q4-5 8 0v8h-8zM20 20h3v14h-3zM26 20h3v14h-3zM40 20h3v14h-3zM46 20h3v14h-3z" fill="#e09a63"/><path d="M31 23h7v11h-7z" fill="#391640"/><path d="M32 11h4v6h-4z" fill="#8c4a2d"/></svg>
  </label>
  <div class="apps d-flex">
    <button aria-label="Task view"><svg width="14" height="13" viewBox="0 0 14 13"><path d="M1 0v2h8V0M1 13v-2h8v2M1 4h8v5H1zM12.500 0v4M12.500 7v6" fill="none" stroke="#ccc"/><circle cx="12.500" cy="5.500" r="1" fill="#fff"/></svg></button>
    <button aria-label="Firefox"><svg width="20" height="20" viewBox="0 0 20 20"><path d="M3 4q2 0 3 1 1-2 3-2 1-2 3-3 1 3 3 4 4 2 4 7a9 9 0 0 1-18 0Q1 7 3 4z" fill="#ff8a1f"/><path d="M1 11a9 9 0 0 0 17 3q-3 4-8 3-5-1-7-7z" fill="#f3385e"/><path d="M11 0q1 3 4 5 4 3 3.500 7Q16 8 11 7 10 3 11 0z" fill="#ffd23e"/><circle cx="10" cy="10.500" r="4" fill="#8b3bd0"/><path d="M6 7q3-1 5 1-3 1-3 3-2-1-2-4z" fill="#ffb02e"/></svg></button>
    <button aria-label="Photoshop"><svg width="19" height="18" viewBox="0 0 19 18"><rect x=".8" y=".8" width="17.400" height="16.400" rx="2.500" fill="#06202e" stroke="#63bdd3" stroke-width="1.300"/><text x="9.500" y="13" font-size="10" font-weight="700" text-anchor="middle" fill="#dff5fb">Ps</text></svg></button>
    <button aria-label="Premiere"><svg width="19" height="18" viewBox="0 0 19 18"><rect width="19" height="18" rx="3" fill="#06004f"/><text x="9.500" y="13" font-size="10" font-weight="700" text-anchor="middle" fill="#aaa4f5">Pr</text></svg></button>
    <button aria-label="Telegram"><svg width="18" height="18" viewBox="0 0 18 18"><circle cx="9" cy="9" r="9" fill="#2f9fd5"/><path d="m3.500 9 10.500-4.500-2 9.500-3-2-1.500 1.500-.5-3z" fill="#fff"/></svg></button>
    <button aria-label="Meet"><svg width="19" height="16" viewBox="0 0 19 16"><path d="M4 0h9v4H4z" fill="#fbbc04"/><path d="M0 4h4v8H0z" fill="#2a76e8"/><path d="M4 0v4H0z" fill="#ea4335"/><path d="M0 12h4v4H2q-2 0-2-2z" fill="#1a5fd0"/><path d="M4 12h9V8l6-6v12l-3-3v5H4z" fill="#23a455"/><path d="M13 4h2v5l-2 2z" fill="#fbbc04"/></svg></button>
    <button aria-label="Paint"><svg width="20" height="20" viewBox="0 0 20 20"><path d="M1 11q0-6 8-7 8 0 8 6 0 3-3 3-2 0-2 2t-3 3Q1 18 1 11z" fill="#d9e3ea"/><circle cx="5" cy="9" r="1.500" fill="#e24"/><circle cx="9" cy="7" r="1.500" fill="#2a6"/><circle cx="5" cy="13" r="1.500" fill="#28c"/><path d="m11 17 6-15" stroke="#d2873f" stroke-width="2"/><path d="m15 4 2-4 3 2-2 4z" fill="#e4c195"/></svg></button>
    <button aria-label="Edge"><svg width="20" height="20" viewBox="0 0 20 20"><circle cx="10" cy="10" r="9.500" fill="#1679c7"/><path d="M1 8Q3 0 11 .5q8 1 8.500 8-.5 4-5.500 4-3 0-1.500-3Q11 5 6 6 3 6 1 8z" fill="#43c5a5"/><path d="M6 13q0-5 5-5 3 1 1.500 3 0 3 6.500 2-2 5-7 5-6-1-6-5z" fill="#0d4f9c"/><path d="M10 .5q8 0 9.500 8-1 3-5 3.500 3-8-4.500-11.500z" fill="#67d36c"/></svg></button>
    <button class="running" aria-label="Chrome"><svg width="20" height="20" viewBox="0 0 20 20"><circle cx="10" cy="10" r="9.500" fill="#f7c52c"/><path d="M10 10 1.800 5.200A9.500 9.500 0 0 1 18.200 5.200H10z" fill="#e34133"/><path d="M1.800 5.200a9.500 9.500 0 0 0 7.700 14.300L13.500 12 6 12z" fill="#2da44f"/><circle cx="10" cy="10" r="4.700" fill="#fff"/><circle cx="10" cy="10" r="3.600" fill="#3b7de9"/></svg></button>
    <button aria-label="Files"><svg width="20" height="17" viewBox="0 0 20 17"><path d="M1 1h7l2 2h9v13H1z" fill="#f0c24e"/><path d="M1 5h18v11H1z" fill="#fbdc83"/><path d="M4 9h12v7h-3v-3H7v3H4z" fill="#4a9bd0"/></svg></button>
    <button aria-label="Photoshop beta"><svg width="19" height="18" viewBox="0 0 19 18"><rect width="19" height="18" rx="3" fill="#001e36"/><text x="9.500" y="12" font-size="9" font-weight="700" text-anchor="middle" fill="#4ab0ee">Ps</text></svg></button>
    <button class="running" aria-label="Excel"><svg width="20" height="18" viewBox="0 0 20 18"><rect x="5" width="15" height="18" rx="1.500" fill="#21a366"/><path d="M12.500 0H20v6h-7.500z" fill="#33c481"/><path d="M5 9h15v9H5z" fill="#107c41"/><rect y="4.500" width="10" height="10" rx="1" fill="#0f6b39"/><path d="m3 7 4 5M7 7l-4 5" stroke="#fff" stroke-width="1.300"/></svg></button>
    <button class="running" aria-label="Acrobat"><svg width="18" height="18" viewBox="0 0 18 18"><rect width="18" height="18" rx="3" fill="#b30f0c"/><path d="M3.500 13.500q5-2 5.500-9 0-2 .8 0 0 6 5.200 6.500-5-1-11.500 2.500z" fill="none" stroke="#fff" stroke-width="1.300"/></svg></button>
  </div>
  <div class="ms-auto d-flex align-items-center">
    <div class="clock">2:05 PM<br>3/4/2024</div>
    <button class="ms-2 me-2 ps-1" aria-label="Notifications"><svg width="22" height="22" viewBox="0 0 22 22"><path d="M1 2h13v10H6l-3 3v-3H1z" fill="#fff"/><path d="M3 5h9M3 7.500h9" stroke="#222"/><circle cx="14" cy="14" r="6.500" fill="#333" stroke="#999"/><text x="14" y="18" font-size="10" font-weight="700" text-anchor="middle" fill="#fff">9</text></svg></button>
  </div>
  <div class="recorder position-absolute d-flex align-items-center">
    <button class="ms-1" aria-label="Stop"><svg width="10" height="10"><path d="M0 0h10v10H0z" fill="#d03a0c"/></svg></button>
    <button aria-label="Pause"><svg width="10" height="10"><path d="M0 0h4v10H0zM6 0h4v10H6z" fill="#4468e8"/></svg></button>
    <svg class="mx-2 flex-grow-1" width="82" height="16" viewBox="0 0 82 16"><g fill="none" stroke="#8f1631" stroke-width="1.300"><path d="M2 2h8v12H2zM13 2h8v12h-8zM31 2v6h8M39 2v12M43 2h8v12h-8zM43 8h8M61 2h8v12h-8zM72 2h8v6h-8v6h8M25 5v1M25 10v1M55 5v1M55 10v1"/></g></svg>
    <button aria-label="Schedule"><svg width="12" height="12" viewBox="0 0 12 12"><circle cx="6" cy="6.500" r="4.500" fill="#fff" stroke="#d55"/><path d="M6 4v3h2M1 2l2-1.500M11 2 9 .5" fill="none" stroke="#c33"/></svg></button>
    <button aria-label="Snapshot"><svg width="13" height="11" viewBox="0 0 13 11"><path d="M0 3h3l1-2h5l1 2h3v8H0z" fill="#7a62c4"/><circle cx="6.500" cy="6.500" r="3" fill="#223" stroke="#9cf"/></svg></button>
    <button aria-label="Sound"><svg width="13" height="12" viewBox="0 0 13 12"><path d="M0 4h3l5-4v12L3 8H0z" fill="#6f8fa8"/><path d="M10 2q3 4 0 8" fill="none" stroke="#3a74a4" stroke-width="1.500"/></svg></button>
    <button class="on" aria-label="Microphone"><svg width="8" height="14" viewBox="0 0 8 14"><rect x="2.500" width="3" height="8" rx="1.500" fill="#777"/><path d="M1 5q0 4.500 3 4.500T7 5M4 9.500V13" fill="none" stroke="#888"/></svg></button>
    <button aria-label="Webcam"><svg width="12" height="13" viewBox="0 0 12 13"><circle cx="6" cy="5.500" r="4" fill="#235" stroke="#4a86c5" stroke-width="2"/><path d="M2 12h8" stroke="#4a86c5" stroke-width="1.500"/></svg></button>
    <button aria-label="Draw"><svg width="13" height="13" viewBox="0 0 13 13"><path d="m0 13 1-4 8-8 3 3-8 8z" fill="#4ba9c8"/><path d="m0 13 1-4 3 3z" fill="#eee"/></svg></button>
    <button aria-label="Cursor"><svg width="9" height="13" viewBox="0 0 9 13"><path d="M.5.500v10l2.300-2 1.700 4 1.500-.7-1.600-3.800h3z" fill="#fff"/></svg></button>
    <button class="on" aria-label="Full screen"><svg width="12" height="11" viewBox="0 0 12 11"><path d="M1 3.500V1h3M8 1h3v2.500M11 7.500V10H8M4 10H1V7.500" fill="none" stroke="#333" stroke-width="1.300"/></svg></button>
    <button aria-label="Preview"><svg width="13" height="9" viewBox="0 0 13 9"><path d="M.5 4.500q6-7 12 0-6 7-12 0z" fill="#222" stroke="#fff"/><circle cx="6.500" cy="4.500" r="2.200" fill="#fff"/></svg></button>
  </div>
</div>
</body>
</html>
